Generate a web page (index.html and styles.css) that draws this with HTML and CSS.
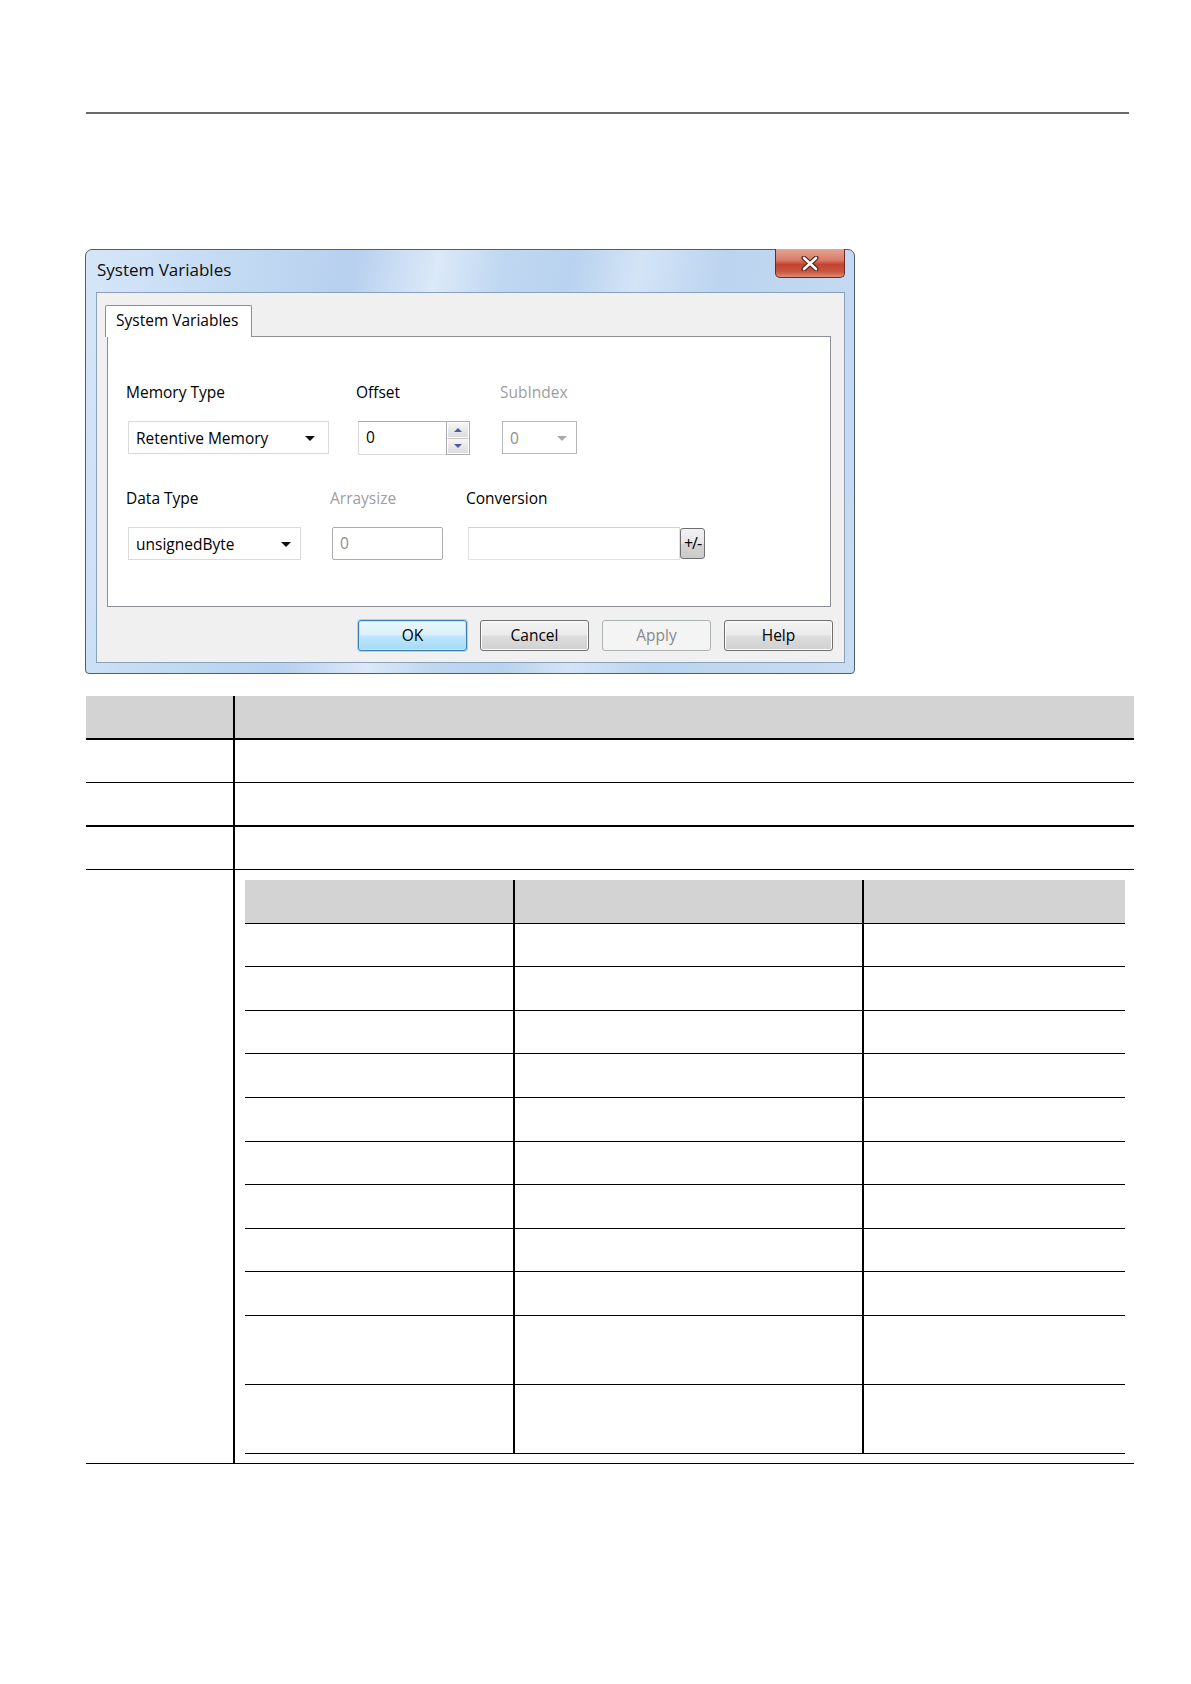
FILE: index.html
```html
<!DOCTYPE html>
<html lang="en">

<head>
  <meta charset="UTF-8" />
  <meta name="viewport" content="width=device-width, initial-scale=1.0" />
  <title>System Variables</title>
  <link rel="stylesheet" href="styles.css">
</head>

<body>
  <div class="page">
    <div class="rule"></div>

    <div class="dialog">
      <div class="titlebar">
        <span class="title">System Variables</span>
        <div class="close">
          <svg width="18" height="15" viewBox="0 0 18 15">
            <path d="M3 2 L15 13 M15 2 L3 13" stroke="#5a2119" stroke-width="5" stroke-linecap="round" fill="none" />
            <path d="M3 2 L15 13 M15 2 L3 13" stroke="#fff" stroke-width="2.6" stroke-linecap="round" fill="none" />
          </svg>
        </div>
      </div>

      <div class="client">
        <div class="tabs">
          <div class="tab">System Variables</div>
        </div>
        <div class="panel">
          <div class="row">
            <div class="field f-mem">
              <div class="label">Memory Type</div>
              <div class="combo c-mem"><span>Retentive Memory</span><i class="arrow"></i></div>
            </div>
            <div class="field f-off">
              <div class="label">Offset</div>
              <div class="spin">
                <div class="edit">0</div>
                <div class="spin-btns">
                  <div class="spin-btn"><i class="tri up"></i></div>
                  <div class="spin-btn"><i class="tri down"></i></div>
                </div>
              </div>
            </div>
            <div class="field">
              <div class="label off">SubIndex</div>
              <div class="combo c-sub disabled"><span>0</span><i class="arrow"></i></div>
            </div>
          </div>
          <div class="row row-2">
            <div class="field f-type">
              <div class="label">Data Type</div>
              <div class="combo c-type"><span>unsignedByte</span><i class="arrow"></i></div>
            </div>
            <div class="field f-arr">
              <div class="label off">Arraysize</div>
              <div class="edit box c-arr">0</div>
            </div>
            <div class="field">
              <div class="label">Conversion</div>
              <div class="conv">
                <div class="edit box c-conv"></div>
                <div class="pm">+/-</div>
              </div>
            </div>
          </div>
        </div>
        <div class="buttons">
          <div class="btn default">OK</div>
          <div class="btn">Cancel</div>
          <div class="btn disabled">Apply</div>
          <div class="btn">Help</div>
        </div>
      </div>
    </div>

    <table class="spec">
      <tr class="head">
        <td class="key"></td>
        <td></td>
      </tr>
      <tr class="thin">
        <td class="key"></td>
        <td></td>
      </tr>
      <tr class="thick r44">
        <td class="key"></td>
        <td></td>
      </tr>
      <tr class="thin">
        <td class="key"></td>
        <td></td>
      </tr>
      <tr class="last">
        <td class="key"></td>
        <td class="nest">
          <table class="sub">
            <tr class="head">
              <td class="c1"></td>
              <td class="c2"></td>
              <td></td>
            </tr>
            <tr class="thin"><td class="c1"></td><td class="c2"></td><td></td></tr>
            <tr class="thick"><td class="c1"></td><td class="c2"></td><td></td></tr>
            <tr class="thick"><td class="c1"></td><td class="c2"></td><td></td></tr>
            <tr class="thin"><td class="c1"></td><td class="c2"></td><td></td></tr>
            <tr class="thick"><td class="c1"></td><td class="c2"></td><td></td></tr>
            <tr class="thin"><td class="c1"></td><td class="c2"></td><td></td></tr>
            <tr class="thick"><td class="c1"></td><td class="c2"></td><td></td></tr>
            <tr class="thin"><td class="c1"></td><td class="c2"></td><td></td></tr>
            <tr class="thick"><td class="c1"></td><td class="c2"></td><td></td></tr>
            <tr class="thick tall"><td class="c1"></td><td class="c2"></td><td></td></tr>
            <tr class="thick tall"><td class="c1"></td><td class="c2"></td><td></td></tr>
          </table>
        </td>
      </tr>
    </table>
  </div>
</body>

</html>
```

FILE: styles.css
```css
* {
  margin: 0;
  padding: 0;
  box-sizing: border-box;
}

body {
  background: #fff;
  font-family: "Open Sans", "Noto Sans", sans-serif;
  color: #000;
}

.page {
  padding: 112px 0 0 86px;
}

.rule {
  width: 1043px;
  height: 2px;
  background-color: #696969;
}

/* dialog */
.dialog {
  margin-top: 135px;
  margin-left: -1px;
  width: 770px;
  height: 425px;
  border: 1px solid #4f5d6e;
  border-radius: 7px 7px 4px 4px;
  padding: 0 9px 10px 10px;
  display: flex;
  flex-direction: column;
  background: linear-gradient(100deg, #d6e6f8 0%, #c3daf3 18%, #b7d0ee 32%, #dbe9f8 42%, #bfd7f1 50%, #b9d2ef 58%, #d3e4f6 66%, #bcd4f0 76%, #c8dcf3 100%);
}

.titlebar {
  height: 42px;
  display: flex;
  justify-content: space-between;
  align-items: flex-start;
}

.title {
  margin-top: 10px;
  margin-left: 1px;
  font-size: 17px;
  line-height: 20px;
  color: #0d0d0d;
}

.close {
  margin-top: -1px;
  width: 70px;
  height: 29px;
  border: 1px solid #6b2a22;
  border-top: none;
  border-radius: 0 0 5px 5px;
  background: linear-gradient(#e5a595 0%, #d97a66 40%, #c3432f 55%, #c85541 80%, #dc8a74 100%);
  display: flex;
  align-items: center;
  justify-content: center;
}

.client {
  flex: 1;
  background-color: #f0f0f0;
  border: 1px solid #8aa0bb;
  padding: 12px 13px 0 8px;
}

.tabs {
  display: flex;
  position: relative;
  z-index: 1;
}

.tab {
  width: 147px;
  height: 32px;
  margin-bottom: -1px;
  background: #fff;
  border: 1px solid #8c8f96;
  border-bottom: none;
  border-radius: 2px 2px 0 0;
  font-size: 15.5px;
  line-height: 28px;
  padding-left: 10px;
  color: #000;
}

.panel {
  height: 271px;
  margin-left: 2px;
  background: #fff;
  border: 1px solid #8c8f96;
  padding: 45px 0 0 20px;
}

.row {
  display: flex;
}

.row-2 {
  margin-top: 33px;
}

.field {
  display: flex;
  flex-direction: column;
}

.f-mem {
  width: 230px;
}

.f-off {
  width: 144px;
}

.f-type {
  width: 204px;
}

.f-arr {
  width: 136px;
}

.label {
  font-size: 15.5px;
  line-height: 20px;
  margin-left: -2px;
  margin-bottom: 19px;
  color: #000;
}

.label.off {
  color: #9e9e9e;
}

.combo {
  height: 33px;
  border: 1px solid #dadada;
  background: #fff;
  display: flex;
  align-items: center;
  justify-content: space-between;
  padding: 0 9px 0 7px;
  font-size: 15.5px;
}

.c-mem {
  width: 201px;
  padding-right: 13px;
}

.c-type {
  width: 173px;
}

.c-sub {
  width: 75px;
  border-color: #b4b6ba;
}

.combo.disabled span {
  color: #8e8e8e;
}

.arrow {
  width: 0;
  height: 0;
  border-left: 5px solid transparent;
  border-right: 5px solid transparent;
  border-top: 5px solid #111;
  margin-top: 2px;
}

.combo.disabled .arrow {
  border-top-color: #a9a9a9;
}

.spin {
  display: flex;
  width: 112px;
  height: 34px;
}

.spin .edit {
  flex: 1;
  border: 1px solid #d6d9de;
  border-top-color: #abadb3;
  border-right: none;
  background: #fff;
  font-size: 15.5px;
  line-height: 30px;
  padding-left: 7px;
}

.spin-btns {
  width: 24px;
  display: flex;
  flex-direction: column;
  border: 1px solid #a9acb2;
}

.spin-btn {
  flex: 1;
  background: linear-gradient(#f6f6f6, #dcdcdc);
  border: 1px solid #fff;
  display: flex;
  align-items: center;
  justify-content: center;
}

.spin-btn + .spin-btn {
  border-top: 1px solid #c5c7cb;
}

.tri {
  width: 0;
  height: 0;
  border-left: 4px solid transparent;
  border-right: 4px solid transparent;
}

.tri.up {
  border-bottom: 4px solid #4e5b9e;
}

.tri.down {
  border-top: 4px solid #4e5b9e;
}

.box {
  height: 33px;
  background: #fff;
  font-size: 15.5px;
  line-height: 30px;
  padding-left: 7px;
}

.c-arr {
  width: 111px;
  border: 1px solid #a9abb0;
  border-radius: 2px;
  color: #8e8e8e;
}

.conv {
  display: flex;
  align-items: center;
}

.c-conv {
  width: 212px;
  border: 1px solid #e0e1e3;
  border-top-color: #cfd1d4;
}

.pm {
  width: 25px;
  height: 31px;
  border: 1px solid #6f6f6f;
  border-radius: 3px;
  background: linear-gradient(#f2f2f2 0%, #e6e6e6 50%, #d4d4d4 51%, #cbcbcb 100%);
  font-size: 16px;
  line-height: 28px;
  text-align: center;
  letter-spacing: -1px;
  color: #000;
}

.buttons {
  display: flex;
  justify-content: flex-end;
  gap: 13px;
  margin-top: 13px;
  margin-right: -2px;
}

.btn {
  width: 109px;
  height: 31px;
  border: 1px solid #707070;
  border-radius: 3px;
  background: linear-gradient(#f3f3f3 0%, #ebebeb 48%, #dddddd 52%, #d0d0d0 100%);
  box-shadow: inset 0 0 0 1px #fcfcfc;
  font-size: 15.5px;
  line-height: 28px;
  text-align: center;
  color: #000;
}

.btn.default {
  border-color: #3c7fb1;
  background: linear-gradient(#eaf6fd 0%, #d9f0fc 48%, #bee6fd 52%, #a7d9f5 100%);
  box-shadow: inset 0 0 0 1px #bfe4f7, 0 0 0 1px #a8d4ee;
}

.btn.disabled {
  border-color: #adb2b5;
  background: #f4f4f4;
  box-shadow: none;
  color: #8a8a8a;
}

/* tables */
.spec {
  margin-top: 22px;
  width: 1048px;
  border-collapse: collapse;
}

.spec td {
  padding: 0;
}

.spec td.key {
  width: 149px;
  border-right: 2px solid #000;
}

.spec tr {
  height: 43px;
}

.spec tr.r44 {
  height: 44px;
}

.spec tr.head td {
  background-color: #d3d3d3;
  border-bottom: 2px solid #000;
}

.spec tr.thin td {
  border-bottom: 1px solid #000;
}

.spec tr.thick td {
  border-bottom: 2px solid #000;
}

.spec tr.last td {
  border-bottom: 1px solid #000;
  vertical-align: top;
}

.spec td.nest {
  padding: 10px 9px 9px 10px;
}

.sub {
  width: 880px;
  border-collapse: collapse;
}

.sub td.c1 {
  width: 269px;
  border-right: 2px solid #000;
}

.sub td.c2 {
  width: 349px;
  border-right: 2px solid #000;
}

.sub tr {
  height: 43.6px;
}

.sub tr.tall {
  height: 69px;
}
```
